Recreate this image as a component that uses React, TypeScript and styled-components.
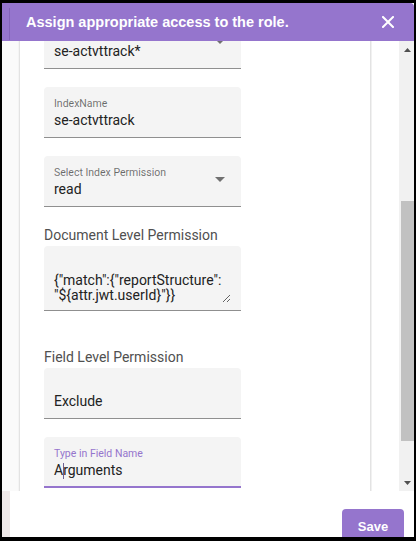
import React from 'react';
import styled, { createGlobalStyle } from 'styled-components';

const GlobalStyle = createGlobalStyle`
  html, body { margin: 0; padding: 0; background: #fff; }
  body { font-family: Roboto, "Liberation Sans", Arial, sans-serif; }
  *, *::before, *::after { box-sizing: border-box; }
`;

const PURPLE = '#9575cd';

const Dialog = styled.div`
  width: 416px;
  height: 541px;
  border-style: solid;
  border-color: #000;
  border-width: 3px 2px 4px 2px;
  display: flex;
  flex-direction: column;
  overflow: hidden;
  background: #fff;
`;

const Header = styled.header`
  height: 38px;
  flex: none;
  background: ${PURPLE};
  border-top-right-radius: 4px;
  display: flex;
  align-items: center;
  padding: 0 20px 0 7px;
`;

const HeaderEdge = styled.span`
  align-self: flex-end;
  width: 1px;
  height: 32px;
  margin-bottom: 1px;
  background: rgba(60, 30, 110, 0.2);
`;

const Title = styled.h2`
  margin: 0 0 0 16px;
  flex: 1;
  font: bold 14.5px "Liberation Sans", Arial, sans-serif;
  color: #fff;
`;

const CloseButton = styled.button`
  all: unset;
  display: flex;
  width: 12px;
  height: 12px;
  cursor: pointer;
`;

const Body = styled.div`
  flex: 1;
  min-height: 0;
  display: flex;
`;

const Viewport = styled.div`
  flex: 1;
  overflow: hidden;
  display: flex;
  align-items: flex-start;
  background: #fff;
`;

const Gutter = styled.div`
  width: 17px;
  align-self: stretch;
  flex: none;
  background: #fafafa;
`;

const Card = styled.div`
  width: 352px;
  flex: none;
  margin-top: -23px;
  padding: 0 0 40px 24px;
  background: #fff;
  border-left: 1px solid #e3e3e3;
  border-right: 1px solid #e3e3e3;
  box-shadow: 1px 0 0 #f1f1f1, -1px 0 0 #f4f4f4;
  display: flex;
  flex-direction: column;
  align-items: flex-start;
  gap: 18px;
`;

const Section = styled.div<{ $extra: number }>`
  display: flex;
  flex-direction: column;
  gap: 3px;
  margin-top: ${(p) => p.$extra}px;
`;

const SectionLabel = styled.div`
  font: 14px/16px Roboto, sans-serif;
  color: #505050;
`;

const Field = styled.div<{ $focused?: boolean; $top: number; $height?: number }>`
  width: 197px;
  height: ${(p) => p.$height ?? 51}px;
  flex: none;
  display: flex;
  align-items: flex-start;
  background: #f4f4f4;
  border-radius: 4px 4px 0 0;
  border-bottom: ${(p) => (p.$focused ? `2px solid ${PURPLE}` : '1px solid #8f8f8f')};
  padding: ${(p) => p.$top}px 10px 0 10px;
`;

const FieldBody = styled.div`
  flex: 1;
  display: flex;
  flex-direction: column;
  min-width: 0;
`;

const FieldLabel = styled.label<{ $focused?: boolean }>`
  display: block;
  min-height: 14px;
  font: 10.5px/14px Roboto, sans-serif;
  color: ${(p) => (p.$focused ? PURPLE : 'rgba(0,0,0,0.56)')};
`;

const FieldValue = styled.div`
  font: 14px/19px Roboto, sans-serif;
  color: #222;
  white-space: nowrap;
`;

const Caret = styled.span`
  display: inline-block;
  width: 1px;
  height: 16px;
  margin-right: -1px;
  vertical-align: -4px;
  background: #6d6192;
`;

const DropArrow = styled.svg`
  flex: none;
  margin: 11px 6px 0 0;
`;

const TextArea = styled.textarea`
  width: 100%;
  height: 30px;
  margin: 0;
  padding: 0;
  border: none;
  outline: none;
  background: transparent;
  resize: both;
  overflow: hidden;
  font: 14px/15px Roboto, sans-serif;
  color: #222;
`;

const RightSpace = styled.div`
  flex: none;
  width: 28px;
`;

const Scrollbar = styled.div`
  width: 15px;
  flex: none;
  background: #f1f1f1;
  display: flex;
  flex-direction: column;
`;

const ScrollArrow = styled.div`
  height: 17px;
  flex: none;
  display: flex;
  align-items: center;
  justify-content: center;
  padding-left: 1px;
`;

const ScrollSpace = styled.div<{ $size?: number }>`
  flex: ${(p) => (p.$size ? `0 0 ${p.$size}px` : '1')};
`;

const Thumb = styled.div`
  flex: 0 0 240px;
  margin-left: 2px;
  background: #c1c1c1;
`;

const Footer = styled.footer`
  height: 46px;
  flex: none;
  display: flex;
  justify-content: flex-end;
  align-items: flex-start;
  padding: 18px 10px 0 0;
  border-left: 8px solid #efe9e9;
  background: #fff;
`;

const SaveButton = styled.button`
  all: unset;
  width: 62px;
  height: 36px;
  flex: none;
  border-radius: 4px;
  background: ${PURPLE};
  color: #fff;
  text-align: center;
  font: bold 13px/34px "Liberation Sans", Arial, sans-serif;
`;

const Arrow = () => (
  <DropArrow width="10" height="5" viewBox="0 0 10 5">
    <path d="M0 0h10L5 5z" fill="rgba(0,0,0,0.54)" />
  </DropArrow>
);

export default function App() {
  return (
    <>
      <GlobalStyle />
      <Dialog>
        <Header>
          <HeaderEdge />
          <Title>Assign appropriate access to the role.</Title>
          <CloseButton aria-label="close">
            <svg width="12" height="12" viewBox="0 0 12 12">
              <path d="M1 1l10 10M11 1L1 11" stroke="#fff" strokeWidth="2" strokeLinecap="square" />
            </svg>
          </CloseButton>
        </Header>
        <Body>
          <Viewport>
            <Gutter />
            <Card>
              <Field $top={10}>
                <FieldBody>
                  <FieldLabel aria-hidden />
                  <FieldValue>se-actvttrack*</FieldValue>
                </FieldBody>
                <Arrow />
              </Field>
              <Field $top={10}>
                <FieldBody>
                  <FieldLabel>IndexName</FieldLabel>
                  <FieldValue>se-actvttrack</FieldValue>
                </FieldBody>
              </Field>
              <Field $top={10}>
                <FieldBody>
                  <FieldLabel>Select Index Permission</FieldLabel>
                  <FieldValue>read</FieldValue>
                </FieldBody>
                <Arrow />
              </Field>
              <Section $extra={2}>
                <SectionLabel>Document Level Permission</SectionLabel>
                <Field $top={27} $height={65}>
                  <TextArea
                    readOnly
                    rows={2}
                    value={'{"match":{"reportStructure": "${attr.jwt.userId}"}}'}
                  />
                </Field>
              </Section>
              <Section $extra={20}>
                <SectionLabel>Field Level Permission</SectionLabel>
                <Field $top={24}>
                  <FieldBody>
                    <FieldValue>Exclude</FieldValue>
                  </FieldBody>
                </Field>
              </Section>
              <Field $top={10} $focused>
                <FieldBody>
                  <FieldLabel $focused>Type in Field Name</FieldLabel>
                  <FieldValue>
                    A<Caret />rguments
                  </FieldValue>
                </FieldBody>
              </Field>
            </Card>
            <RightSpace />
          </Viewport>
          <Scrollbar>
            <ScrollArrow>
              <svg width="7" height="4" viewBox="0 0 7 4">
                <path d="M3.5 0L7 4H0z" fill="#505050" />
              </svg>
            </ScrollArrow>
            <ScrollSpace $size={143} />
            <Thumb />
            <ScrollSpace />
            <ScrollArrow>
              <svg width="7" height="4" viewBox="0 0 7 4">
                <path d="M0 0h7L3.5 4z" fill="#505050" />
              </svg>
            </ScrollArrow>
          </Scrollbar>
        </Body>
        <Footer>
          <SaveButton>Save</SaveButton>
        </Footer>
      </Dialog>
    </>
  );
}
